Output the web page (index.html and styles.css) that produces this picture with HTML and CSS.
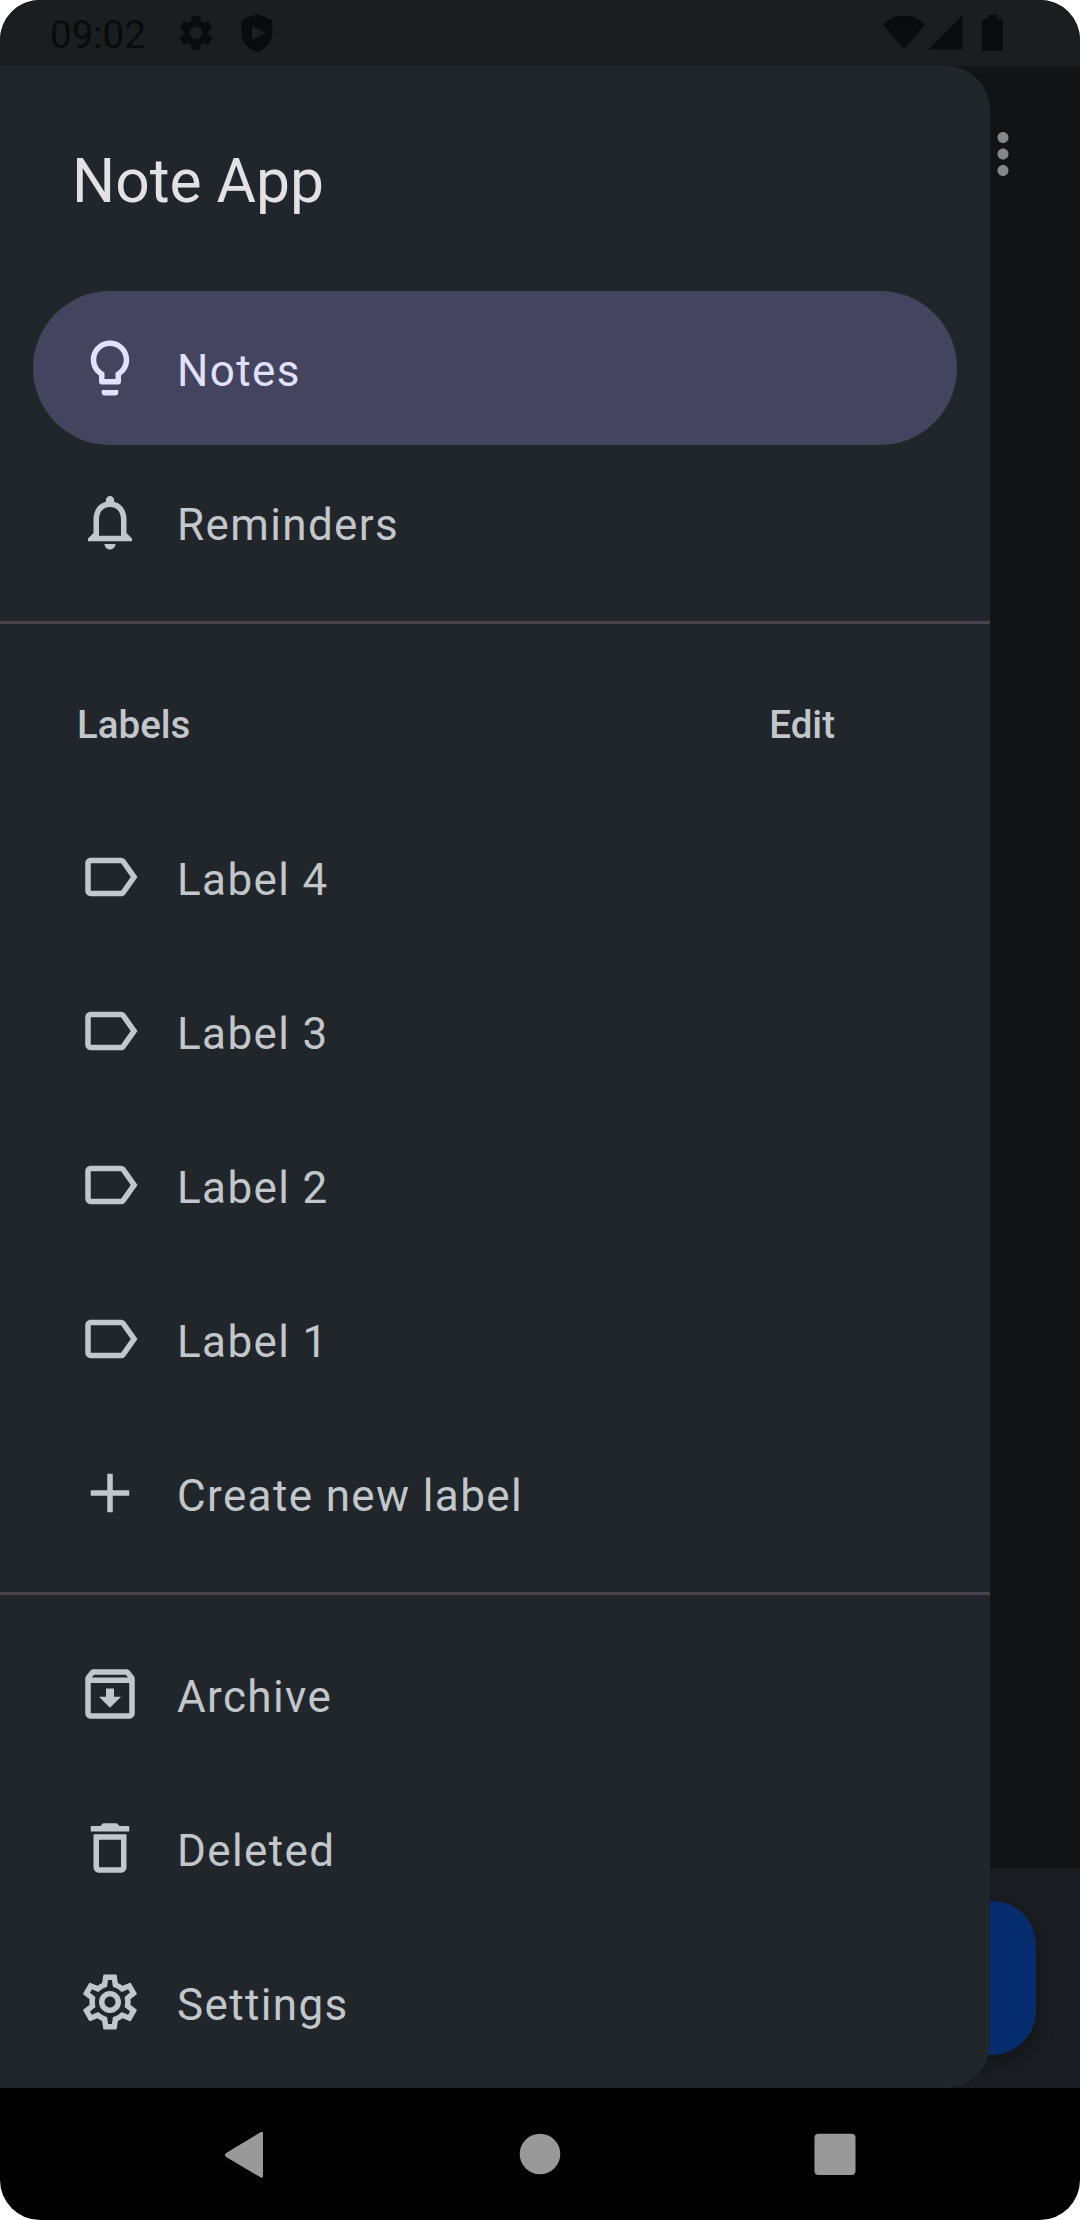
FILE: index.html
```html
<!DOCTYPE html>
<html lang="en">
<head>
<meta charset="utf-8">
<title>Note App</title>
<link rel="stylesheet" href="styles.css">
</head>
<body>
<svg class="defs" width="0" height="0" aria-hidden="true">
  <symbol id="label" viewBox="0 0 24 24"><path d="M17.63 5.84C17.27 5.33 16.67 5 16 5L5 5.01C3.9 5.01 3 5.9 3 7v10c0 1.100.9 1.99 2 1.99L16 19c.67 0 1.27-.33 1.63-.84L22 12l-4.37-6.16zM16 17H5V7h11l3.55 5L16 17z"/></symbol>
</svg>
<div class="phone">
  <header class="status">
    <span class="clock">09:02</span>
    <svg class="gear" viewBox="0 0 24 24"><path d="M19.14 12.94c.04-.3.06-.61.06-.94 0-.32-.02-.64-.07-.94l2.03-1.58c.18-.14.23-.41.12-.61l-1.92-3.32c-.12-.22-.37-.29-.59-.22l-2.39.96c-.5-.38-1.03-.7-1.62-.94l-.36-2.54c-.04-.24-.24-.41-.48-.41h-3.84c-.24 0-.43.17-.47.41l-.36 2.54c-.59.24-1.13.57-1.62.94l-2.39-.96c-.22-.08-.47 0-.59.22L2.74 8.87c-.12.21-.08.47.12.61l2.03 1.58c-.05.3-.09.63-.09.94s.02.64.07.94l-2.03 1.58c-.18.14-.23.41-.12.61l1.92 3.32c.12.22.37.29.59.22l2.39-.96c.5.38 1.03.7 1.62.94l.36 2.54c.05.24.24.41.48.41h3.84c.24 0 .44-.17.47-.41l.36-2.54c.59-.24 1.13-.56 1.62-.94l2.39.96c.22.08.47 0 .59-.22l1.92-3.32c.12-.22.07-.47-.12-.61l-2.01-1.58zM12 15.6c-1.98 0-3.6-1.62-3.6-3.6s1.62-3.6 3.6-3.6 3.6 1.62 3.6 3.6-1.62 3.6-3.6 3.6z"/></svg>
    <svg class="shield" viewBox="0 0 32 38"><path fill-rule="evenodd" d="M16 0 31.3 6V19C31.3 28 25 35.500 16 38 7 35.500 .5 28 .5 19V6ZM11 12V26L25 19Z"/></svg>
    <span class="spacer"></span>
    <svg class="wifi" viewBox="0 0 42 36"><path d="M0 9.500Q9 .5 21 .5T42 9.500L21 34.500Z"/></svg>
    <svg class="signal" viewBox="0 0 35 36"><path d="M34.500 .5V34.500H.5Z"/></svg>
    <svg class="battery" viewBox="0 0 21 36"><path d="M6 0H15V4H19Q21 4 21 6V34Q21 36 19 36H2Q0 36 0 34V6Q0 4 2 4H6Z"/></svg>
  </header>

  <main class="stage">
    <div class="app">
      <div class="toolbar"><svg class="icon" viewBox="0 0 24 24"><path d="M12 8c1.100 0 2-.9 2-2s-.9-2-2-2-2 .9-2 2 .9 2 2 2zm0 2c-1.100 0-2 .9-2 2s.9 2 2 2 2-.9 2-2-.9-2-2-2zm0 6c-1.100 0-2 .9-2 2s.9 2 2 2 2-.9 2-2-.9-2-2-2z"/></svg></div>
      <div class="bottombar"><div class="fab"></div></div>
    </div>

    <nav class="drawer">
      <h1 class="title">Note App</h1>
      <ul class="group">
        <li class="item selected"><svg class="icon" viewBox="0 0 24 24"><path d="M9 21c0 .55.45 1 1 1h4c.55 0 1-.45 1-1v-1H9v1zm3-19C8.140 2 5 5.140 5 9c0 2.380 1.190 4.470 3 5.740V17c0 .55.45 1 1 1h6c.55 0 1-.45 1-1v-2.260c1.810-1.270 3-3.360 3-5.740 0-3.860-3.140-7-7-7zm2.850 11.100l-.85.6V16h-4v-2.300l-.85-.6C7.800 12.160 7 10.630 7 9c0-2.760 2.240-5 5-5s5 2.240 5 5c0 1.630-.8 3.160-2.150 4.100z"/></svg><span>Notes</span></li>
        <li class="item"><svg class="icon" viewBox="0 0 24 24"><path d="M12 22c1.100 0 2-.9 2-2h-4c0 1.100.9 2 2 2zm6-6v-5c0-3.070-1.630-5.640-4.500-6.320V4c0-.83-.67-1.500-1.500-1.500s-1.500.67-1.500 1.500v.68C7.640 5.360 6 7.920 6 11v5l-2 2v1h16v-1l-2-2zm-2 1H8v-6c0-2.480 1.510-4.500 4-4.500s4 2.020 4 4.500v6z"/></svg><span>Reminders</span></li>
      </ul>
      <div class="divider"></div>
      <div class="section"><span>Labels</span><span>Edit</span></div>
      <ul class="group">
        <li class="item"><svg class="icon"><use href="#label"/></svg><span>Label 4</span></li>
        <li class="item"><svg class="icon"><use href="#label"/></svg><span>Label 3</span></li>
        <li class="item"><svg class="icon"><use href="#label"/></svg><span>Label 2</span></li>
        <li class="item"><svg class="icon"><use href="#label"/></svg><span>Label 1</span></li>
        <li class="item"><svg class="icon" viewBox="0 0 24 24"><path d="M19 13h-6v6h-2v-6H5v-2h6V5h2v6h6v2z"/></svg><span>Create new label</span></li>
      </ul>
      <div class="divider"></div>
      <ul class="group last">
        <li class="item"><svg class="icon" viewBox="0 0 24 24"><path d="M20.540 5.230l-1.390-1.680C18.880 3.210 18.470 3 18 3H6c-.47 0-.88.21-1.160.55L3.460 5.230C3.170 5.570 3 6.020 3 6.500V19c0 1.100.9 2 2 2h14c1.100 0 2-.9 2-2V6.500c0-.48-.17-.93-.46-1.270zM6.240 5h11.520l.83 1H5.420l.82-1zM5 19V8h14v11H5zm8.450-9h-2.900v3H8l4 4 4-4h-2.550z"/></svg><span>Archive</span></li>
        <li class="item"><svg class="icon" viewBox="0 0 24 24"><path d="M6 19c0 1.100.9 2 2 2h8c1.100 0 2-.9 2-2V7H6v12zM8 9h8v10H8V9zm7.500-5l-1-1h-5l-1 1H5v2h14V4h-3.500z"/></svg><span>Deleted</span></li>
        <li class="item"><svg class="icon" viewBox="0 0 24 24"><path d="M19.430 12.980c.04-.32.07-.64.07-.98 0-.34-.03-.66-.07-.98l2.110-1.650c.19-.15.24-.42.12-.64l-2-3.460c-.09-.16-.26-.25-.44-.25-.06 0-.12.010-.17.030l-2.490 1c-.52-.4-1.080-.73-1.690-.98l-.38-2.650C14.460 2.180 14.250 2 14 2h-4c-.25 0-.46.18-.49.42l-.38 2.650c-.61.25-1.170.59-1.690.98l-2.490-1c-.06-.02-.12-.03-.18-.03-.17 0-.34.09-.43.25l-2 3.460c-.13.22-.07.49.12.64l2.110 1.650c-.04.32-.07.65-.07.98 0 .33.03.66.07.98l-2.110 1.650c-.19.15-.24.42-.12.64l2 3.460c.09.16.26.25.44.25.06 0 .12-.01.17-.03l2.490-1c.52.4 1.080.73 1.690.98l.38 2.650c.03.24.24.42.49.42h4c.25 0 .46-.18.49-.42l.38-2.650c.61-.25 1.170-.59 1.690-.98l2.490 1c.06.02.12.03.18.03.17 0 .34-.09.43-.25l2-3.460c.12-.22.07-.49-.12-.64l-2.110-1.650zm-1.980-1.710c.04.31.05.52.05.73 0 .21-.02.43-.05.73l-.14 1.130.89.7 1.080.84-.7 1.210-1.270-.51-1.040-.42-.9.68c-.43.32-.84.56-1.250.73l-1.060.43-.16 1.130-.2 1.350h-1.400l-.19-1.350-.16-1.130-1.060-.43c-.43-.18-.83-.41-1.230-.71l-.91-.7-1.060.43-1.270.51-.7-1.210 1.080-.84.89-.7-.14-1.130c-.03-.31-.05-.54-.05-.74s.02-.43.05-.73l.14-1.130-.89-.7-1.080-.84.7-1.210 1.270.51 1.040.42.9-.68c.43-.32.84-.56 1.250-.73l1.060-.43.16-1.130.2-1.350h1.390l.19 1.350.16 1.130 1.060.43c.43.18.83.41 1.230.71l.91.7 1.060-.43 1.270-.51.7 1.210-1.070.85-.89.7.14 1.130zM12 8c-2.210 0-4 1.790-4 4s1.790 4 4 4 4-1.790 4-4-1.790-4-4-4zm0 6c-1.100 0-2-.9-2-2s.9-2 2-2 2 .9 2 2-.9 2-2 2z"/></svg><span>Settings</span></li>
      </ul>
    </nav>
  </main>

  <footer class="sysnav">
    <svg viewBox="0 0 66 66"><path d="M51 12.500V55Q51 58 48 56L14.200 36Q11.700 34 14.200 32L48 11.500Q51 9.500 51 12.500Z"/></svg>
    <svg viewBox="0 0 66 66"><circle cx="33" cy="33" r="20.300"/></svg>
    <svg viewBox="0 0 66 66"><rect x="12.500" y="12.800" width="41" height="41.200" rx="4"/></svg>
  </footer>
</div>
</body>
</html>
```
FILE: styles.css
```css
* { box-sizing: border-box; }
html, body { margin: 0; background: #fff; }
body { font-family: Roboto, sans-serif; color: #c2c7cc; }
.defs { position: absolute; }
ul { list-style: none; margin: 0; padding: 0; }
svg { display: block; flex: none; fill: currentColor; }

.phone {
  width: 1080px;
  height: 2220px;
  display: flex;
  flex-direction: column;
  overflow: hidden;
  border-radius: 40px;
  background: #000;
}

.status {
  height: 66px;
  padding: 0 77px 0 50px;
  display: flex;
  align-items: center;
  background: #1a1e20;
  color: #090b0c;
}
.clock { font-size: 38.5px; line-height: 44px; padding-top: 3px; }
.gear { width: 42px; height: 42px; margin-left: 29px; }
.shield { width: 32px; height: 38px; margin-left: 24px; }
.spacer { flex: 1; }
.wifi { width: 42px; height: 36px; }
.signal { width: 35px; height: 36px; margin-left: 3px; }
.battery { width: 21px; height: 36px; margin-left: 19px; }

.stage { height: 2022px; display: grid; grid-template-columns: 1080px; }
.app, .drawer { grid-area: 1 / 1; }

.app {
  display: flex;
  flex-direction: column;
  justify-content: space-between;
  background: #111314;
}
.toolbar {
  height: 176px;
  padding-right: 44px;
  display: flex;
  align-items: center;
  justify-content: flex-end;
  color: #84888c;
}
.icon { width: 66px; height: 66px; }
.bottombar {
  height: 220px;
  padding: 33px 44px;
  display: flex;
  justify-content: flex-end;
  background: #1a1d21;
  overflow: hidden;
}
.fab {
  width: 154px;
  height: 154px;
  border-radius: 44px;
  background: #052d6d;
  box-shadow: 0 8px 20px rgba(0, 0, 0, .3);
}

.drawer {
  z-index: 1;
  width: 990px;
  border-radius: 0 44px 44px 0;
  background: #21262a;
}
.title {
  margin: 0;
  height: 225px;
  padding: 80px 0 0 72px;
  font-size: 60.5px;
  line-height: 71px;
  font-weight: 400;
  color: #e2e2e5;
}
.group { padding: 0 33px 22px; }
.item {
  height: 154px;
  padding-left: 44px;
  display: flex;
  align-items: center;
  gap: 34px;
  font-size: 44px;
  letter-spacing: 1.375px;
}
.item span { padding-top: 6px; line-height: 52px; }
.selected { border-radius: 77px; background: #44445f; color: #e0e0ff; }
.divider { height: 3px; background: #49454f; }
.section {
  height: 176px;
  padding: 78px 155px 0 77px;
  display: flex;
  justify-content: space-between;
  font-size: 38.5px;
  line-height: 45px;
  font-weight: 500;
}
.last { padding: 22px 33px 0; }

.sysnav {
  height: 132px;
  padding: 0 212px;
  display: flex;
  align-items: center;
  justify-content: space-between;
  color: #999;
}
.sysnav svg { width: 66px; height: 66px; }
```
